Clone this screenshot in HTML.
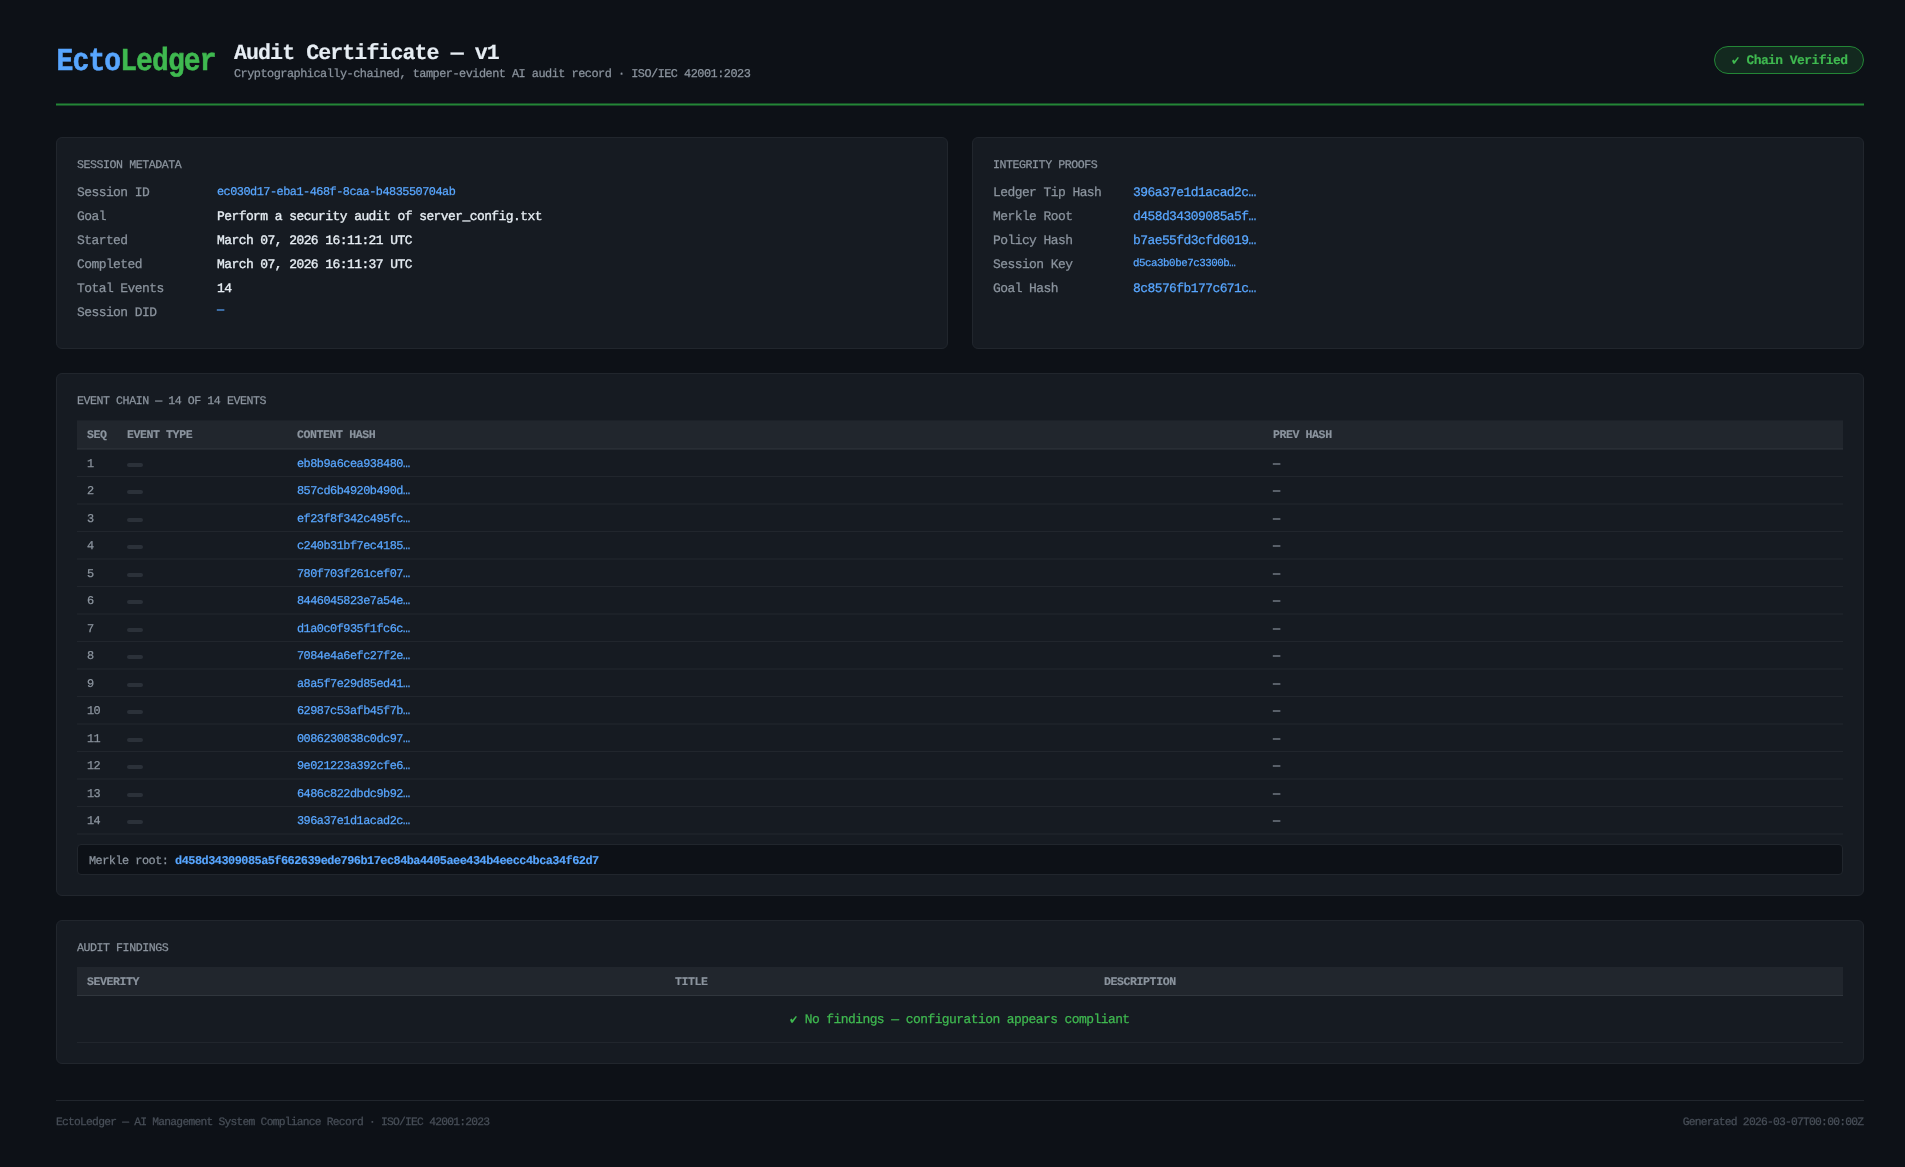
<!DOCTYPE html>
<html lang="en"><head><meta charset="utf-8"><title>EctoLedger Audit Certificate</title>
<style>
html,body{margin:0;padding:0;background:#0d1117;}
body{position:relative;width:1905px;height:1167px;overflow:hidden;font-family:"Liberation Mono",monospace;}
.t{position:absolute;white-space:pre;line-height:24px;height:24px;font-family:"Liberation Mono",monospace;font-kerning:none;font-variant-ligatures:none;text-rendering:geometricPrecision;}
.b{position:absolute;}
#w{position:absolute;left:0;top:0;width:1905px;height:1167px;will-change:transform;}
</style></head><body><div id="w">
<div class="t" style="top:52.00px;font-size:28.00px;letter-spacing:-0.897px;color:#58a6ff;font-weight:700;-webkit-text-stroke:0.5px #58a6ff;left:56.60px;transform:scaleY(1.14);transform-origin:0 18.00px;"><span style="color:#58a6ff;-webkit-text-stroke:0.5px #58a6ff">Ecto</span><span style="color:#3fb950;-webkit-text-stroke:0.5px #3fb950">Ledger</span></div>
<div class="t" style="top:42.00px;font-size:21.60px;letter-spacing:-0.922px;color:#e6edf3;font-weight:700;-webkit-text-stroke:0.15px #e6edf3;left:234.00px;">Audit Certificate — v1</div>
<div class="t" style="top:62.00px;font-size:11.88px;letter-spacing:-0.507px;color:#8b949e;-webkit-text-stroke:0.25px #8b949e;left:234.00px;">Cryptographically-chained, tamper-evident AI audit record · ISO/IEC 42001:2023</div>
<div class="b" style="left:1714px;top:46px;width:150px;height:28px;background:#13291f;border:1px solid #238636;border-radius:14px;box-sizing:border-box;"></div>
<svg class="b" width="8" height="8" viewBox="0 0 8 8" style="left:1731.50px;top:56.90px;overflow:visible"><path d="M0 3.8 L1.7 2.6 L2.5 4.0 L5.8 0 L6.9 0.8 L2.7 6.7 L1.3 6.7 Z" fill="#3fb950"/></svg>
<div class="t" style="top:49.00px;font-size:12.96px;letter-spacing:-0.553px;color:#3fb950;font-weight:700;-webkit-text-stroke:0.15px #3fb950;left:1746.45px;">Chain Verified</div>
<div class="b" style="left:56px;top:103px;width:1808px;height:3px;background:#184c27;"></div>
<div class="b" style="left:56px;top:104px;width:1808px;height:1px;background:#238636;"></div>
<div class="b" style="left:56px;top:137px;width:892px;height:212px;background:#161b22;border:1px solid #21262d;border-radius:6px;box-sizing:border-box;"></div>
<div class="b" style="left:972px;top:137px;width:892px;height:212px;background:#161b22;border:1px solid #21262d;border-radius:6px;box-sizing:border-box;"></div>
<div class="t" style="top:154.00px;font-size:11.60px;letter-spacing:-0.441px;color:#8b949e;-webkit-text-stroke:0.25px #8b949e;left:77.00px;">SESSION METADATA</div>
<div class="t" style="top:154.00px;font-size:11.60px;letter-spacing:-0.441px;color:#8b949e;-webkit-text-stroke:0.25px #8b949e;left:993.00px;">INTEGRITY PROOFS</div>
<div class="t" style="top:181.00px;font-size:12.96px;letter-spacing:-0.553px;color:#8b949e;-webkit-text-stroke:0.25px #8b949e;left:77.00px;">Session ID</div>
<div class="t" style="top:205.00px;font-size:12.96px;letter-spacing:-0.553px;color:#8b949e;-webkit-text-stroke:0.25px #8b949e;left:77.00px;">Goal</div>
<div class="t" style="top:205.00px;font-size:12.96px;letter-spacing:-0.553px;color:#e6edf3;-webkit-text-stroke:0.35px #e6edf3;left:217.00px;">Perform a security audit of server_config.txt</div>
<div class="t" style="top:229.00px;font-size:12.96px;letter-spacing:-0.553px;color:#8b949e;-webkit-text-stroke:0.25px #8b949e;left:77.00px;">Started</div>
<div class="t" style="top:229.00px;font-size:12.96px;letter-spacing:-0.553px;color:#e6edf3;-webkit-text-stroke:0.35px #e6edf3;left:217.00px;">March 07, 2026 16:11:21 UTC</div>
<div class="t" style="top:253.00px;font-size:12.96px;letter-spacing:-0.553px;color:#8b949e;-webkit-text-stroke:0.25px #8b949e;left:77.00px;">Completed</div>
<div class="t" style="top:253.00px;font-size:12.96px;letter-spacing:-0.553px;color:#e6edf3;-webkit-text-stroke:0.35px #e6edf3;left:217.00px;">March 07, 2026 16:11:37 UTC</div>
<div class="t" style="top:277.00px;font-size:12.96px;letter-spacing:-0.553px;color:#8b949e;-webkit-text-stroke:0.25px #8b949e;left:77.00px;">Total Events</div>
<div class="t" style="top:277.00px;font-size:12.96px;letter-spacing:-0.553px;color:#e6edf3;-webkit-text-stroke:0.35px #e6edf3;left:217.00px;">14</div>
<div class="t" style="top:301.00px;font-size:12.96px;letter-spacing:-0.553px;color:#8b949e;-webkit-text-stroke:0.25px #8b949e;left:77.00px;">Session DID</div>
<div class="t" style="top:180.00px;font-size:11.88px;letter-spacing:-0.507px;color:#58a6ff;-webkit-text-stroke:0.25px #58a6ff;left:217.00px;">ec030d17-eba1-468f-8caa-b483550704ab</div>
<div class="t" style="top:298.00px;font-size:11.88px;letter-spacing:-0.507px;color:#58a6ff;-webkit-text-stroke:0.25px #58a6ff;left:217.00px;">—</div>
<div class="t" style="top:181.00px;font-size:12.96px;letter-spacing:-0.553px;color:#8b949e;-webkit-text-stroke:0.25px #8b949e;left:993.00px;">Ledger Tip Hash</div>
<div class="t" style="top:181.00px;font-size:12.96px;letter-spacing:-0.553px;color:#58a6ff;-webkit-text-stroke:0.25px #58a6ff;left:1133.00px;">396a37e1d1acad2c…</div>
<div class="t" style="top:205.00px;font-size:12.96px;letter-spacing:-0.553px;color:#8b949e;-webkit-text-stroke:0.25px #8b949e;left:993.00px;">Merkle Root</div>
<div class="t" style="top:205.00px;font-size:12.96px;letter-spacing:-0.553px;color:#58a6ff;-webkit-text-stroke:0.25px #58a6ff;left:1133.00px;">d458d34309085a5f…</div>
<div class="t" style="top:229.00px;font-size:12.96px;letter-spacing:-0.553px;color:#8b949e;-webkit-text-stroke:0.25px #8b949e;left:993.00px;">Policy Hash</div>
<div class="t" style="top:229.00px;font-size:12.96px;letter-spacing:-0.553px;color:#58a6ff;-webkit-text-stroke:0.25px #58a6ff;left:1133.00px;">b7ae55fd3cfd6019…</div>
<div class="t" style="top:253.00px;font-size:12.96px;letter-spacing:-0.553px;color:#8b949e;-webkit-text-stroke:0.25px #8b949e;left:993.00px;">Session Key</div>
<div class="t" style="top:252.00px;font-size:10.80px;letter-spacing:-0.461px;color:#58a6ff;-webkit-text-stroke:0.25px #58a6ff;left:1133.00px;">d5ca3b0be7c3300b…</div>
<div class="t" style="top:277.00px;font-size:12.96px;letter-spacing:-0.553px;color:#8b949e;-webkit-text-stroke:0.25px #8b949e;left:993.00px;">Goal Hash</div>
<div class="t" style="top:277.00px;font-size:12.96px;letter-spacing:-0.553px;color:#58a6ff;-webkit-text-stroke:0.25px #58a6ff;left:1133.00px;">8c8576fb177c671c…</div>
<div class="b" style="left:56px;top:373px;width:1808px;height:523px;background:#161b22;border:1px solid #21262d;border-radius:6px;box-sizing:border-box;"></div>
<div class="t" style="top:390.00px;font-size:11.60px;letter-spacing:-0.441px;color:#8b949e;-webkit-text-stroke:0.25px #8b949e;left:77.00px;">EVENT CHAIN — 14 OF 14 EVENTS</div>
<div class="b" style="left:77px;top:420px;width:1766px;height:1px;background:#1c2128;"></div>
<div class="b" style="left:77px;top:421px;width:1766px;height:27px;background:#21262d;"></div>
<div class="b" style="left:77px;top:448px;width:1766px;height:1px;background:#292e35;"></div>
<div class="b" style="left:77px;top:449px;width:1766px;height:1px;background:#23282f;"></div>
<div class="t" style="top:424.00px;font-size:11.60px;letter-spacing:-0.441px;color:#8b949e;font-weight:700;-webkit-text-stroke:0.15px #8b949e;left:87.00px;">SEQ</div>
<div class="t" style="top:424.00px;font-size:11.60px;letter-spacing:-0.441px;color:#8b949e;font-weight:700;-webkit-text-stroke:0.15px #8b949e;left:127.00px;">EVENT TYPE</div>
<div class="t" style="top:424.00px;font-size:11.60px;letter-spacing:-0.441px;color:#8b949e;font-weight:700;-webkit-text-stroke:0.15px #8b949e;left:297.00px;">CONTENT HASH</div>
<div class="t" style="top:424.00px;font-size:11.60px;letter-spacing:-0.441px;color:#8b949e;font-weight:700;-webkit-text-stroke:0.15px #8b949e;left:1273.00px;">PREV HASH</div>
<div class="b" style="left:77px;top:476.0px;width:1766px;height:1.0px;background:#21262d;"></div>
<div class="t" style="top:452.00px;font-size:11.88px;letter-spacing:-0.507px;color:#8b949e;-webkit-text-stroke:0.25px #8b949e;left:87.00px;">1</div>
<div class="b" style="left:127px;top:462.5px;width:16px;height:4.5px;background:#2b3139;border-radius:2.3px;"></div>
<div class="t" style="top:452.00px;font-size:11.88px;letter-spacing:-0.507px;color:#58a6ff;-webkit-text-stroke:0.25px #58a6ff;left:297.00px;">eb8b9a6cea938480…</div>
<div class="t" style="top:452.00px;font-size:11.88px;letter-spacing:-0.507px;color:#8b949e;-webkit-text-stroke:0.25px #8b949e;left:1273.00px;">—</div>
<div class="b" style="left:77px;top:503.0px;width:1766px;height:2.0px;background:#1c2128;"></div>
<div class="t" style="top:479.00px;font-size:11.88px;letter-spacing:-0.507px;color:#8b949e;-webkit-text-stroke:0.25px #8b949e;left:87.00px;">2</div>
<div class="b" style="left:127px;top:489.5px;width:16px;height:4.5px;background:#2b3139;border-radius:2.3px;"></div>
<div class="t" style="top:479.00px;font-size:11.88px;letter-spacing:-0.507px;color:#58a6ff;-webkit-text-stroke:0.25px #58a6ff;left:297.00px;">857cd6b4920b490d…</div>
<div class="t" style="top:479.00px;font-size:11.88px;letter-spacing:-0.507px;color:#8b949e;-webkit-text-stroke:0.25px #8b949e;left:1273.00px;">—</div>
<div class="b" style="left:77px;top:531.0px;width:1766px;height:1.0px;background:#21262d;"></div>
<div class="t" style="top:507.00px;font-size:11.88px;letter-spacing:-0.507px;color:#8b949e;-webkit-text-stroke:0.25px #8b949e;left:87.00px;">3</div>
<div class="b" style="left:127px;top:517.5px;width:16px;height:4.5px;background:#2b3139;border-radius:2.3px;"></div>
<div class="t" style="top:507.00px;font-size:11.88px;letter-spacing:-0.507px;color:#58a6ff;-webkit-text-stroke:0.25px #58a6ff;left:297.00px;">ef23f8f342c495fc…</div>
<div class="t" style="top:507.00px;font-size:11.88px;letter-spacing:-0.507px;color:#8b949e;-webkit-text-stroke:0.25px #8b949e;left:1273.00px;">—</div>
<div class="b" style="left:77px;top:558.0px;width:1766px;height:2.0px;background:#1c2128;"></div>
<div class="t" style="top:534.00px;font-size:11.88px;letter-spacing:-0.507px;color:#8b949e;-webkit-text-stroke:0.25px #8b949e;left:87.00px;">4</div>
<div class="b" style="left:127px;top:544.5px;width:16px;height:4.5px;background:#2b3139;border-radius:2.3px;"></div>
<div class="t" style="top:534.00px;font-size:11.88px;letter-spacing:-0.507px;color:#58a6ff;-webkit-text-stroke:0.25px #58a6ff;left:297.00px;">c240b31bf7ec4185…</div>
<div class="t" style="top:534.00px;font-size:11.88px;letter-spacing:-0.507px;color:#8b949e;-webkit-text-stroke:0.25px #8b949e;left:1273.00px;">—</div>
<div class="b" style="left:77px;top:586.0px;width:1766px;height:1.0px;background:#21262d;"></div>
<div class="t" style="top:562.00px;font-size:11.88px;letter-spacing:-0.507px;color:#8b949e;-webkit-text-stroke:0.25px #8b949e;left:87.00px;">5</div>
<div class="b" style="left:127px;top:572.5px;width:16px;height:4.5px;background:#2b3139;border-radius:2.3px;"></div>
<div class="t" style="top:562.00px;font-size:11.88px;letter-spacing:-0.507px;color:#58a6ff;-webkit-text-stroke:0.25px #58a6ff;left:297.00px;">780f703f261cef07…</div>
<div class="t" style="top:562.00px;font-size:11.88px;letter-spacing:-0.507px;color:#8b949e;-webkit-text-stroke:0.25px #8b949e;left:1273.00px;">—</div>
<div class="b" style="left:77px;top:613.0px;width:1766px;height:2.0px;background:#1c2128;"></div>
<div class="t" style="top:589.00px;font-size:11.88px;letter-spacing:-0.507px;color:#8b949e;-webkit-text-stroke:0.25px #8b949e;left:87.00px;">6</div>
<div class="b" style="left:127px;top:599.5px;width:16px;height:4.5px;background:#2b3139;border-radius:2.3px;"></div>
<div class="t" style="top:589.00px;font-size:11.88px;letter-spacing:-0.507px;color:#58a6ff;-webkit-text-stroke:0.25px #58a6ff;left:297.00px;">8446045823e7a54e…</div>
<div class="t" style="top:589.00px;font-size:11.88px;letter-spacing:-0.507px;color:#8b949e;-webkit-text-stroke:0.25px #8b949e;left:1273.00px;">—</div>
<div class="b" style="left:77px;top:641.0px;width:1766px;height:1.0px;background:#21262d;"></div>
<div class="t" style="top:617.00px;font-size:11.88px;letter-spacing:-0.507px;color:#8b949e;-webkit-text-stroke:0.25px #8b949e;left:87.00px;">7</div>
<div class="b" style="left:127px;top:627.5px;width:16px;height:4.5px;background:#2b3139;border-radius:2.3px;"></div>
<div class="t" style="top:617.00px;font-size:11.88px;letter-spacing:-0.507px;color:#58a6ff;-webkit-text-stroke:0.25px #58a6ff;left:297.00px;">d1a0c0f935f1fc6c…</div>
<div class="t" style="top:617.00px;font-size:11.88px;letter-spacing:-0.507px;color:#8b949e;-webkit-text-stroke:0.25px #8b949e;left:1273.00px;">—</div>
<div class="b" style="left:77px;top:668.0px;width:1766px;height:2.0px;background:#1c2128;"></div>
<div class="t" style="top:644.00px;font-size:11.88px;letter-spacing:-0.507px;color:#8b949e;-webkit-text-stroke:0.25px #8b949e;left:87.00px;">8</div>
<div class="b" style="left:127px;top:654.5px;width:16px;height:4.5px;background:#2b3139;border-radius:2.3px;"></div>
<div class="t" style="top:644.00px;font-size:11.88px;letter-spacing:-0.507px;color:#58a6ff;-webkit-text-stroke:0.25px #58a6ff;left:297.00px;">7084e4a6efc27f2e…</div>
<div class="t" style="top:644.00px;font-size:11.88px;letter-spacing:-0.507px;color:#8b949e;-webkit-text-stroke:0.25px #8b949e;left:1273.00px;">—</div>
<div class="b" style="left:77px;top:696.0px;width:1766px;height:1.0px;background:#21262d;"></div>
<div class="t" style="top:672.00px;font-size:11.88px;letter-spacing:-0.507px;color:#8b949e;-webkit-text-stroke:0.25px #8b949e;left:87.00px;">9</div>
<div class="b" style="left:127px;top:682.5px;width:16px;height:4.5px;background:#2b3139;border-radius:2.3px;"></div>
<div class="t" style="top:672.00px;font-size:11.88px;letter-spacing:-0.507px;color:#58a6ff;-webkit-text-stroke:0.25px #58a6ff;left:297.00px;">a8a5f7e29d85ed41…</div>
<div class="t" style="top:672.00px;font-size:11.88px;letter-spacing:-0.507px;color:#8b949e;-webkit-text-stroke:0.25px #8b949e;left:1273.00px;">—</div>
<div class="b" style="left:77px;top:723.0px;width:1766px;height:2.0px;background:#1c2128;"></div>
<div class="t" style="top:699.00px;font-size:11.88px;letter-spacing:-0.507px;color:#8b949e;-webkit-text-stroke:0.25px #8b949e;left:87.00px;">10</div>
<div class="b" style="left:127px;top:709.5px;width:16px;height:4.5px;background:#2b3139;border-radius:2.3px;"></div>
<div class="t" style="top:699.00px;font-size:11.88px;letter-spacing:-0.507px;color:#58a6ff;-webkit-text-stroke:0.25px #58a6ff;left:297.00px;">62987c53afb45f7b…</div>
<div class="t" style="top:699.00px;font-size:11.88px;letter-spacing:-0.507px;color:#8b949e;-webkit-text-stroke:0.25px #8b949e;left:1273.00px;">—</div>
<div class="b" style="left:77px;top:751.0px;width:1766px;height:1.0px;background:#21262d;"></div>
<div class="t" style="top:727.00px;font-size:11.88px;letter-spacing:-0.507px;color:#8b949e;-webkit-text-stroke:0.25px #8b949e;left:87.00px;">11</div>
<div class="b" style="left:127px;top:737.5px;width:16px;height:4.5px;background:#2b3139;border-radius:2.3px;"></div>
<div class="t" style="top:727.00px;font-size:11.88px;letter-spacing:-0.507px;color:#58a6ff;-webkit-text-stroke:0.25px #58a6ff;left:297.00px;">0086230838c0dc97…</div>
<div class="t" style="top:727.00px;font-size:11.88px;letter-spacing:-0.507px;color:#8b949e;-webkit-text-stroke:0.25px #8b949e;left:1273.00px;">—</div>
<div class="b" style="left:77px;top:778.0px;width:1766px;height:2.0px;background:#1c2128;"></div>
<div class="t" style="top:754.00px;font-size:11.88px;letter-spacing:-0.507px;color:#8b949e;-webkit-text-stroke:0.25px #8b949e;left:87.00px;">12</div>
<div class="b" style="left:127px;top:764.5px;width:16px;height:4.5px;background:#2b3139;border-radius:2.3px;"></div>
<div class="t" style="top:754.00px;font-size:11.88px;letter-spacing:-0.507px;color:#58a6ff;-webkit-text-stroke:0.25px #58a6ff;left:297.00px;">9e021223a392cfe6…</div>
<div class="t" style="top:754.00px;font-size:11.88px;letter-spacing:-0.507px;color:#8b949e;-webkit-text-stroke:0.25px #8b949e;left:1273.00px;">—</div>
<div class="b" style="left:77px;top:806.0px;width:1766px;height:1.0px;background:#21262d;"></div>
<div class="t" style="top:782.00px;font-size:11.88px;letter-spacing:-0.507px;color:#8b949e;-webkit-text-stroke:0.25px #8b949e;left:87.00px;">13</div>
<div class="b" style="left:127px;top:792.5px;width:16px;height:4.5px;background:#2b3139;border-radius:2.3px;"></div>
<div class="t" style="top:782.00px;font-size:11.88px;letter-spacing:-0.507px;color:#58a6ff;-webkit-text-stroke:0.25px #58a6ff;left:297.00px;">6486c822dbdc9b92…</div>
<div class="t" style="top:782.00px;font-size:11.88px;letter-spacing:-0.507px;color:#8b949e;-webkit-text-stroke:0.25px #8b949e;left:1273.00px;">—</div>
<div class="b" style="left:77px;top:833.0px;width:1766px;height:2.0px;background:#1c2128;"></div>
<div class="t" style="top:809.00px;font-size:11.88px;letter-spacing:-0.507px;color:#8b949e;-webkit-text-stroke:0.25px #8b949e;left:87.00px;">14</div>
<div class="b" style="left:127px;top:819.5px;width:16px;height:4.5px;background:#2b3139;border-radius:2.3px;"></div>
<div class="t" style="top:809.00px;font-size:11.88px;letter-spacing:-0.507px;color:#58a6ff;-webkit-text-stroke:0.25px #58a6ff;left:297.00px;">396a37e1d1acad2c…</div>
<div class="t" style="top:809.00px;font-size:11.88px;letter-spacing:-0.507px;color:#8b949e;-webkit-text-stroke:0.25px #8b949e;left:1273.00px;">—</div>
<div class="b" style="left:77px;top:844px;width:1766px;height:31px;background:#0d1117;border:1px solid #21262d;border-radius:4px;box-sizing:border-box;"></div>
<div class="t" style="top:849.00px;font-size:11.88px;letter-spacing:-0.507px;color:#8b949e;-webkit-text-stroke:0.25px #8b949e;left:89.00px;">Merkle root:</div>
<div class="t" style="top:849.00px;font-size:11.88px;letter-spacing:-0.507px;color:#58a6ff;font-weight:700;-webkit-text-stroke:0.15px #58a6ff;left:175.09px;">d458d34309085a5f662639ede796b17ec84ba4405aee434b4eecc4bca34f62d7</div>
<div class="b" style="left:56px;top:920px;width:1808px;height:144px;background:#161b22;border:1px solid #21262d;border-radius:6px;box-sizing:border-box;"></div>
<div class="t" style="top:937.00px;font-size:11.60px;letter-spacing:-0.441px;color:#8b949e;-webkit-text-stroke:0.25px #8b949e;left:77.00px;">AUDIT FINDINGS</div>
<div class="b" style="left:77px;top:967px;width:1766px;height:29px;background:#21262d;border-bottom:1px solid #30363d;box-sizing:border-box;"></div>
<div class="t" style="top:971.00px;font-size:11.60px;letter-spacing:-0.441px;color:#8b949e;font-weight:700;-webkit-text-stroke:0.15px #8b949e;left:87.00px;">SEVERITY</div>
<div class="t" style="top:971.00px;font-size:11.60px;letter-spacing:-0.441px;color:#8b949e;font-weight:700;-webkit-text-stroke:0.15px #8b949e;left:675.00px;">TITLE</div>
<div class="t" style="top:971.00px;font-size:11.60px;letter-spacing:-0.441px;color:#8b949e;font-weight:700;-webkit-text-stroke:0.15px #8b949e;left:1104.00px;">DESCRIPTION</div>
<svg class="b" width="8" height="8" viewBox="0 0 8 8" style="left:790.40px;top:1015.80px;overflow:visible"><path d="M0 3.8 L1.7 2.6 L2.5 4.0 L5.8 0 L6.9 0.8 L2.7 6.7 L1.3 6.7 Z" fill="#3fb950"/></svg>
<div class="t" style="top:1008.00px;font-size:12.96px;letter-spacing:-0.553px;color:#3fb950;-webkit-text-stroke:0.25px #3fb950;left:804.68px;">No findings — configuration appears compliant</div>
<div class="b" style="left:77px;top:1042px;width:1766px;height:1px;background:#21262d;"></div>
<div class="b" style="left:56px;top:1100px;width:1808px;height:1px;background:#21262d;"></div>
<div class="t" style="top:1111.00px;font-size:11.30px;letter-spacing:-0.761px;color:#484f58;-webkit-text-stroke:0.25px #484f58;left:56.00px;">EctoLedger — AI Management System Compliance Record · ISO/IEC 42001:2023</div>
<div class="t" style="top:1111.00px;font-size:11.30px;letter-spacing:-0.761px;color:#484f58;-webkit-text-stroke:0.25px #484f58;right:41.76px;">Generated 2026-03-07T00:00:00Z</div>
</div></body></html>
